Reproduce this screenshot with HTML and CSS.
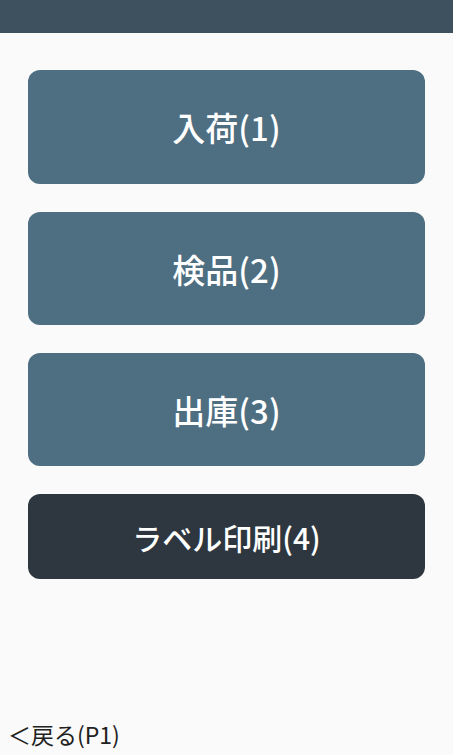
FILE: index.html
```html
<!DOCTYPE html>
<html lang="ja">
<head>
<meta charset="utf-8">
<link rel="stylesheet" href="styles.css">
</head>
<body>
<div class="page">
  <header class="topbar"></header>
  <main class="menu">
    <button class="btn btn-main">入荷(1)</button>
    <button class="btn btn-main">検品(2)</button>
    <button class="btn btn-main">出庫(3)</button>
    <button class="btn btn-dark">ラベル印刷(4)</button>
  </main>
  <footer class="footer">＜戻る(P1)</footer>
</div>
</body>
</html>
```
FILE: styles.css
```css
html, body {
  margin: 0;
  padding: 0;
  background: #fafafa;
}
body {
  font-family: "Noto Sans CJK JP", "Noto Sans", sans-serif;
}
.page {
  height: 755px;
  display: flex;
  flex-direction: column;
}
.topbar {
  height: 33px;
  background: #3d525e;
  flex: none;
}
.menu {
  padding: 37px 28px 0 28px;
  display: flex;
  flex-direction: column;
  gap: 28px;
  flex: 1;
}
.btn {
  border: none;
  border-radius: 12px;
  color: #ffffff;
  font-family: "Noto Sans CJK JP", "Noto Sans", sans-serif;
  font-weight: 500;
  font-size: 33px;
  width: 100%;
  padding: 0;
  display: flex;
  align-items: center;
  justify-content: center;
}
.btn-main {
  height: 114px;
  background: #4e6e81;
}
.btn-main + .btn-main {
  height: 113px;
}
.btn-dark {
  height: 85px;
  background: #2e3740;
  font-size: 30px;
}
.footer {
  padding: 0 0 6px 8px;
  font-size: 23px;
  color: #222222;
  line-height: 30px;
}
```
